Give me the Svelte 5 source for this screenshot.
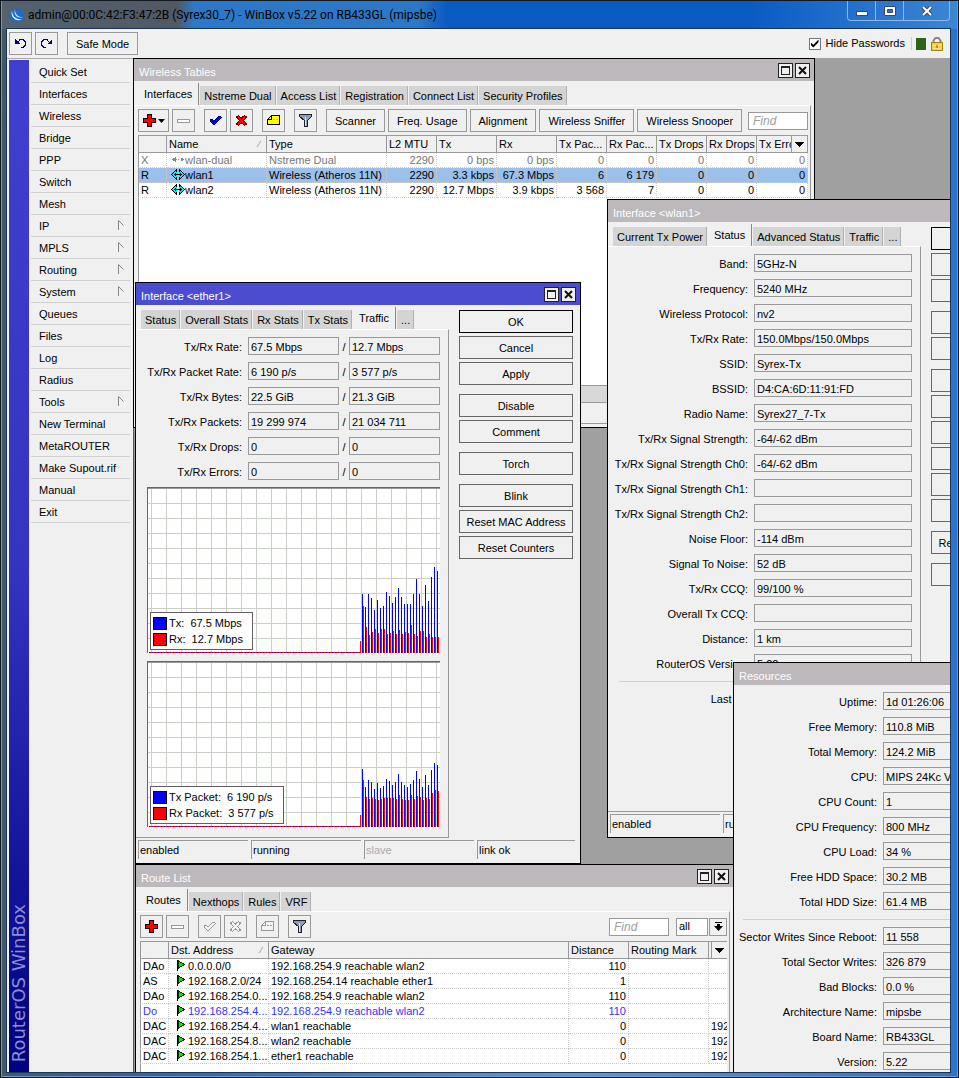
<script>
    let hidePasswords = true;
    let routeFilter = 'all';

    const menu = [
        { name: 'Quick Set' },
        { name: 'Interfaces' },
        { name: 'Wireless' },
        { name: 'Bridge' },
        { name: 'PPP' },
        { name: 'Switch' },
        { name: 'Mesh' },
        { name: 'IP', sub: true },
        { name: 'MPLS', sub: true },
        { name: 'Routing', sub: true },
        { name: 'System', sub: true },
        { name: 'Queues' },
        { name: 'Files' },
        { name: 'Log' },
        { name: 'Radius' },
        { name: 'Tools', sub: true },
        { name: 'New Terminal' },
        { name: 'MetaROUTER' },
        { name: 'Make Supout.rif' },
        { name: 'Manual' },
        { name: 'Exit' }
    ];

    // window places on the desktop
    const place = {
        wireless: { x: 0, y: 0, w: 682, h: 370 },
        routes: { x: 2, y: 806, w: 599, h: 300 },
        wlan1: { x: 474, y: 141, w: 446, h: 639 },
        ether1: { x: 2, y: 224, w: 446, h: 582 },
        resources: { x: 600, y: 604, w: 317, h: 460 }
    };

    const box = (p) => `left:${p.x}px;top:${p.y}px;width:${p.w}px;height:${p.h}px`;

    const wirelessCols = [
        { name: '', w: 29 },
        { name: 'Name', w: 100, sort: true },
        { name: 'Type', w: 120 },
        { name: 'L2 MTU', w: 50 },
        { name: 'Tx', w: 60 },
        { name: 'Rx', w: 60 },
        { name: 'Tx Pac...', w: 50 },
        { name: 'Rx Pac...', w: 50 },
        { name: 'Tx Drops', w: 50 },
        { name: 'Rx Drops', w: 50 },
        { name: 'Tx Erro', w: 35 }
    ];

    const wirelessRows = [
        { flag: 'X', name: 'wlan-dual', type: 'Nstreme Dual', state: 'off', nums: ['2290', '0 bps', '0 bps', '0', '0', '0', '0', '0'] },
        { flag: 'R', name: 'wlan1', type: 'Wireless (Atheros 11N)', state: 'selected', nums: ['2290', '3.3 kbps', '67.3 Mbps', '6', '6 179', '0', '0', '0'] },
        { flag: 'R', name: 'wlan2', type: 'Wireless (Atheros 11N)', state: '', nums: ['2290', '12.7 Mbps', '3.9 kbps', '3 568', '7', '0', '0', '0'] }
    ];

    const routeCols = [
        { name: '', w: 29 },
        { name: 'Dst. Address', w: 100, sort: true },
        { name: 'Gateway', w: 300 },
        { name: 'Distance', w: 60 },
        { name: 'Routing Mark', w: 80 },
        { name: '', w: 3 }
    ];

    const routeRows = [
        { flag: 'DAo', dst: '0.0.0.0/0', gw: '192.168.254.9 reachable wlan2', dist: 110, src: '' },
        { flag: 'AS', dst: '192.168.2.0/24', gw: '192.168.254.14 reachable ether1', dist: 1, src: '' },
        { flag: 'DAo', dst: '192.168.254.0...', gw: '192.168.254.9 reachable wlan2', dist: 110, src: '' },
        { flag: 'Do', dst: '192.168.254.4...', gw: '192.168.254.9 reachable wlan2', dist: 110, src: '', inactive: true },
        { flag: 'DAC', dst: '192.168.254.4...', gw: 'wlan1 reachable', dist: 0, src: '192' },
        { flag: 'DAC', dst: '192.168.254.8...', gw: 'wlan2 reachable', dist: 0, src: '192' },
        { flag: 'DAC', dst: '192.168.254.1...', gw: 'ether1 reachable', dist: 0, src: '192' }
    ];

    const etherFields = [
        ['Tx/Rx Rate', '67.5 Mbps', '12.7 Mbps'],
        ['Tx/Rx Packet Rate', '6 190 p/s', '3 577 p/s'],
        ['Tx/Rx Bytes', '22.5 GiB', '21.3 GiB'],
        ['Tx/Rx Packets', '19 299 974', '21 034 711'],
        ['Tx/Rx Drops', '0', '0'],
        ['Tx/Rx Errors', '0', '0']
    ];

    const wlanFields = [
        ['Band', '5GHz-N'],
        ['Frequency', '5240 MHz'],
        ['Wireless Protocol', 'nv2'],
        ['Tx/Rx Rate', '150.0Mbps/150.0Mbps'],
        ['SSID', 'Syrex-Tx'],
        ['BSSID', 'D4:CA:6D:11:91:FD'],
        ['Radio Name', 'Syrex27_7-Tx'],
        ['Tx/Rx Signal Strength', '-64/-62 dBm'],
        ['Tx/Rx Signal Strength Ch0', '-64/-62 dBm'],
        ['Tx/Rx Signal Strength Ch1', ''],
        ['Tx/Rx Signal Strength Ch2', ''],
        ['Noise Floor', '-114 dBm'],
        ['Signal To Noise', '52 dB'],
        ['Tx/Rx CCQ', '99/100 %'],
        ['Overall Tx CCQ', ''],
        ['Distance', '1 km'],
        ['RouterOS Version', '5.22'],
        null,
        ['Last IP', '']
    ];

    const resourceFields = [
        ['Uptime', '1d 01:26:06'],
        ['Free Memory', '110.8 MiB'],
        ['Total Memory', '124.2 MiB'],
        ['CPU', 'MIPS 24Kc V7.4'],
        ['CPU Count', '1'],
        ['CPU Frequency', '800 MHz'],
        ['CPU Load', '34 %'],
        ['Free HDD Space', '30.2 MB'],
        ['Total HDD Size', '61.4 MB'],
        null,
        ['Sector Writes Since Reboot', '11 558'],
        ['Total Sector Writes', '326 879'],
        ['Bad Blocks', '0.0 %'],
        ['Architecture Name', 'mipsbe'],
        ['Board Name', 'RB433GL'],
        ['Version', '5.22']
    ];

    const etherButtons = [
        ['OK', 'Cancel', 'Apply'],
        ['Disable', 'Comment'],
        ['Torch'],
        ['Blink', 'Reset MAC Address', 'Reset Counters']
    ];

    const wlanButtons = [
        ['OK', 'Cancel', 'Apply'],
        ['Disable', 'Comment'],
        ['Scan...', 'Freq. Usage...', 'Align...', 'Sniff...', 'Snooper...', 'Torch'],
        ['Reset MAC Address'],
        ['Blink']
    ];

    const bitCharts = {
        tx: [59, 46, 59, 55, 43, 53, 45, 47, 61, 57, 50, 56, 65, 56, 49, 49, 49, 59, 74, 59, 47, 68, 52, 76, 86, 82],
        rx: [47, 26, 18, 21, 24, 20, 24, 24, 19, 20, 22, 19, 23, 19, 21, 20, 28, 19, 17, 22, 22, 16, 19, 16, 16, 16],
        legend: ['Tx:  67.5 Mbps', 'Rx:  12.7 Mbps']
    };

    const packetCharts = {
        tx: [58, 40, 47, 45, 38, 44, 39, 41, 48, 46, 42, 45, 53, 45, 42, 40, 43, 47, 56, 48, 40, 52, 42, 57, 64, 62],
        rx: [47, 30, 28, 29, 28, 27, 28, 29, 29, 29, 29, 28, 32, 28, 27, 27, 32, 28, 31, 30, 27, 29, 28, 34, 37, 36],
        legend: ['Tx Packet:  6 190 p/s', 'Rx Packet:  3 577 p/s']
    };

    const vlines = Array.from({ length: 20 }, (_, i) => 4 + i * 15);
    const hlines = Array.from({ length: 10 }, (_, i) => 16 + i * 15);
</script>

{#snippet icon(name)}
    {#if name === 'undo' || name === 'redo'}
        <svg class="icon" class:flip={name === 'redo'} width="13" height="11" viewBox="0 0 13 11">
            <path d="M1 1V6H6Z" fill="#000080" />
            <path d="M3.500 4.500L6 1.500H9L11.500 4V7L9 9.500H7" fill="none" stroke="#000080" />
        </svg>
    {:else if name === 'add'}
        <svg class="icon" width="13" height="13" viewBox="0 0 13 13">
            <path d="M4.500 .500H8.500V4.500H12.500V8.500H8.500V12.500H4.500V8.500H.500V4.500H4.500Z" fill="#f00" stroke="#000" />
        </svg>
    {:else if name === 'remove'}
        <svg class="icon" width="13" height="13" viewBox="0 0 13 13">
            <rect x="0.5" y="5.5" width="12" height="3" fill="#fff" stroke="#999" />
        </svg>
    {:else if name === 'enable' || name === 'enable-off'}
        <svg class="icon" width="13" height="13" viewBox="0 0 13 13">
            <path
                d="M1 6L3 5L5 7L10 2L12 3V4L5 11L1 7Z"
                fill={name === 'enable' ? '#00f' : '#f4f4f4'}
                stroke={name === 'enable' ? '#000080' : '#999'}
            />
        </svg>
    {:else if name === 'disable' || name === 'disable-off'}
        <svg class="icon" width="13" height="13" viewBox="0 0 13 13">
            <path
                d="M1.500 3L3.500 1.500L6.500 4L9.500 1.500L11.500 3L8.500 6.500L11.500 10L9.500 11.500L6.500 9L3.500 11.500L1.500 10L4.500 6.500Z"
                fill={name === 'disable' ? '#f00' : '#f4f4f4'}
                stroke={name === 'disable' ? '#500' : '#999'}
            />
        </svg>
    {:else if name === 'comment' || name === 'comment-off'}
        <svg class="icon" width="13" height="13" viewBox="0 0 13 13">
            <path
                d="M4.500 1.500H12.500V10.500H.500V5.500Z"
                fill={name === 'comment' ? '#ff0' : '#f4f4f4'}
                stroke={name === 'comment' ? '#000' : '#999'}
            />
            <path d="M.500 5.500H4.500V1.500" fill="none" stroke={name === 'comment' ? '#000' : '#999'} />
            <path d="M6 5.500H11" stroke={name === 'comment' ? '#bb8' : '#999'} stroke-dasharray="2 1" />
        </svg>
    {:else if name === 'filter'}
        <svg class="icon" width="13" height="13" viewBox="0 0 13 13">
            <path d="M.500 .500H12.500V2.500L8.500 6.500V12.500H5.500V6.500L.500 2.500Z" fill="#8c9cbc" stroke="#222" />
            <path d="M6.500 3V12" stroke="#dde4f0" />
        </svg>
    {:else if name === 'wlan' || name === 'wlan-off'}
        <svg class="icon" width="14" height="11" viewBox="0 0 14 11">
            {#if name === 'wlan'}
                <path d="M5.500 .500V10.500L.500 5.500ZM8.500 .500V10.500L13.500 5.500Z" fill="#0ee" stroke="#000" />
                <path d="M5 3H6V8H5ZM8 3H9V8H8Z" fill="#0ee" />
                <path d="M3 5.500H11M4.500 4V7M9.500 4V7" stroke="#000" />
            {:else}
                <path d="M4.500 3V8L1 5.500ZM9.500 3V8L13 5.500Z" fill="#888" />
                <path d="M5 5.500H9" stroke="#888" stroke-dasharray="1 1" />
            {/if}
        </svg>
    {:else if name === 'route'}
        <svg class="icon" width="9" height="11" viewBox="0 0 9 11">
            <path d="M1.500 1L7.500 4.500L1.500 8Z" fill="#0e0" stroke="#030" />
            <path d="M.500 0V11" stroke="#000" />
        </svg>
    {:else if name === 'down'}
        <svg class="icon" width="9" height="5" viewBox="0 0 9 5"><path d="M0 0H9L4.500 5Z" /></svg>
    {/if}
{/snippet}

{#snippet titleBar(title, buttons)}
    <header class="win-title">
        <span>{title}</span>
        {#if buttons}
            <button class="win-btn" aria-label="Maximize">
                <svg class="icon" width="9" height="9" viewBox="0 0 9 9">
                    <path d="M.500 1H8.500V8.500H.500Z" fill="none" stroke="#222" />
                    <path d="M0 1H9" stroke="#222" stroke-width="2" />
                </svg>
            </button>
            <button class="win-btn" aria-label="Close">
                <svg width="9" height="9" viewBox="0 0 9 9"><path d="M1 1L8 8M8 1L1 8" stroke="#111" stroke-width="2" /></svg>
            </button>
        {/if}
    </header>
{/snippet}

{#snippet tabs(names, active)}
    <nav class="tabs">
        {#each names as name}
            <button class="tab" class:active={name === active}>{name}</button>
        {/each}
    </nav>
{/snippet}

{#snippet field(prefix, row)}
    {#if row}
        <div class="field">
            <label for="{prefix}-{row[0]}">{row[0]}:</label>
            <input id="{prefix}-{row[0]}" value={row[1]} readonly />
        </div>
    {:else}
        <hr />
    {/if}
{/snippet}

{#snippet sideButtons(groups)}
    <div class="side-buttons">
        {#each groups as group}
            <div class="btn-group">
                {#each group as name}
                    <button class="btn" class:default={name === 'OK'}>{name}</button>
                {/each}
            </div>
        {/each}
    </div>
{/snippet}

{#snippet chart(data)}
    <div class="chart">
        <svg width="293" height="167" viewBox="0 0 293 167" shape-rendering="crispEdges">
            <rect width="293" height="167" fill="#fff" />
            {#each vlines as x}
                <rect {x} y="0" width="1" height="166" fill="#c8d0c8" />
            {/each}
            {#each hlines as y}
                <rect x="0" {y} width="293" height="1" fill="#c8d0c8" />
            {/each}
            <path d="M2 165.500H213" stroke="#00f" />
            <path d="M3 165.500H213" stroke="#f00" stroke-dasharray="2 1" />
            <rect x="213" y="154" width="1" height="12" fill="#f00" />
            {#each data.tx as h, i}
                <rect x={215 + i * 3} y={166 - h} width="1" height={h} fill="#00f" />
            {/each}
            {#each data.rx as h, i}
                <rect x={216 + i * 3} y={166 - h} width="1" height={h} fill="#f00" />
            {/each}
            <path d="M0 .500H293M.500 0V166" stroke="#666" />
            <path d="M1 1.500H293" stroke="#999" />
        </svg>
        <div class="legend">
            <div><i class="tx"></i>{data.legend[0]}</div>
            <div><i class="rx"></i>{data.legend[1]}</div>
        </div>
    </div>
{/snippet}

{#snippet tableHead(cols)}
    <colgroup>
        {#each cols as col}
            <col style="width:{col.w}px" />
        {/each}
        <col style="width:16px" />
    </colgroup>
    <thead>
        <tr>
            {#each cols as col}
                <th>
                    <span>{col.name}</span>
                    {#if col.sort}<span class="sort">∕</span>{/if}
                </th>
            {/each}
            <th class="pick">{@render icon('down')}</th>
        </tr>
    </thead>
{/snippet}

<div class="frame">
    <header class="app-title">
        <svg width="15" height="15" viewBox="0 0 15 15">
            <circle cx="7.5" cy="7.5" r="7" fill="#1c6cc8" />
            <path d="M3 2.500C3 8 7 12 13 11.500C7 14 1 9 3 2.500Z" fill="#fff" />
            <path d="M6 1.500C6 6 9 9.500 14 9C9 11 4 7 6 1.500Z" fill="#cfe4fa" />
        </svg>
        <h1>admin@00:0C:42:F3:47:2B (Syrex30_7) - WinBox v5.22 on RB433GL (mipsbe)</h1>
        <div class="sys-buttons">
            <button aria-label="Minimize">
                <svg width="12" height="10" viewBox="0 0 12 10"><rect x="0.5" y="5.5" width="11" height="4" fill="#fff" stroke="#446" /></svg>
            </button>
            <button aria-label="Maximize">
                <svg width="12" height="10" viewBox="0 0 12 10">
                    <path d="M.500 .500H11.500V9.500H.500ZM3.500 3.500V6.500H8.500V3.500Z" fill="#fff" stroke="#446" fill-rule="evenodd" />
                </svg>
            </button>
            <button class="close" aria-label="Close">
                <svg width="12" height="10" viewBox="0 0 12 10">
                    <path d="M2 1L10 9M10 1L2 9" stroke="#446" stroke-width="4" />
                    <path d="M2 1L10 9M10 1L2 9" stroke="#fff" stroke-width="2" />
                </svg>
            </button>
        </div>
    </header>

    <div class="client">
        <div class="top-bar">
            <button class="tool" aria-label="Undo">{@render icon('undo')}</button>
            <button class="tool" aria-label="Redo">{@render icon('redo')}</button>
            <button class="tool group">Safe Mode</button>
            <label class="hide"><input type="checkbox" bind:checked={hidePasswords} />Hide Passwords</label>
            <span class="led"></span>
            <svg width="12" height="14" viewBox="0 0 12 14">
                <path d="M2.500 7V3.500L4.500 1H7.500L9.500 3.500V7" fill="none" stroke="#888" stroke-width="2" />
                <rect x="0.5" y="5.5" width="11" height="8" fill="#f4d048" stroke="#a88018" />
                <path d="M2 8.500H10M2 11.500H10" stroke="#fbe690" />
                <path d="M6 8V11" stroke="#805c10" />
            </svg>
        </div>

        <div class="main">
            <aside>
                <div class="brand"><span>RouterOS WinBox</span></div>
                <nav class="menu">
                    {#each menu as item}
                        <button>
                            {item.name}
                            {#if item.sub}
                                <svg width="6" height="10" viewBox="0 0 6 10"><path d="M.500 10V.500L5.500 5.500" fill="none" stroke="#888" /></svg>
                            {/if}
                        </button>
                    {/each}
                </nav>
            </aside>

            <div class="desktop">
                <section class="win" style={box(place.wireless)}>
                    {@render titleBar('Wireless Tables', true)}
                    {@render tabs(['Interfaces', 'Nstreme Dual', 'Access List', 'Registration', 'Connect List', 'Security Profiles'], 'Interfaces')}
                    <div class="list-panel">
                        <div class="tools">
                            <button class="tool wide" aria-label="Add">{@render icon('add')}<svg width="7" height="4" viewBox="0 0 7 4"><path d="M0 0H7L3.500 4Z" /></svg></button>
                            <button class="tool" aria-label="Remove">{@render icon('remove')}</button>
                            <button class="tool group" aria-label="Enable">{@render icon('enable')}</button>
                            <button class="tool" aria-label="Disable">{@render icon('disable')}</button>
                            <button class="tool group" aria-label="Comment">{@render icon('comment')}</button>
                            <button class="tool group" aria-label="Filter">{@render icon('filter')}</button>
                            <button class="tool group">Scanner</button>
                            <button class="tool">Freq. Usage</button>
                            <button class="tool">Alignment</button>
                            <button class="tool">Wireless Sniffer</button>
                            <button class="tool">Wireless Snooper</button>
                            <input class="find" placeholder="Find" aria-label="Find" />
                        </div>
                        <div class="grid">
                            <table>
                                {@render tableHead(wirelessCols)}
                                <tbody>
                                    {#each wirelessRows as row}
                                        <tr class={row.state}>
                                            <td>{row.flag}</td>
                                            <td class="named">{@render icon(row.state === 'off' ? 'wlan-off' : 'wlan')}{row.name}</td>
                                            <td>{row.type}</td>
                                            {#each row.nums as num, i}
                                                <td class="num" colspan={i === 7 ? 2 : 1}>{num}</td>
                                            {/each}
                                        </tr>
                                    {/each}
                                </tbody>
                            </table>
                        </div>
                        <div class="scroll"></div>
                        <div class="count"></div>
                    </div>
                </section>

                <section class="win" style={box(place.routes)}>
                    {@render titleBar('Route List', true)}
                    {@render tabs(['Routes', 'Nexthops', 'Rules', 'VRF'], 'Routes')}
                    <div class="list-panel">
                        <div class="tools">
                            <button class="tool" aria-label="Add">{@render icon('add')}</button>
                            <button class="tool" aria-label="Remove">{@render icon('remove')}</button>
                            <button class="tool group" aria-label="Enable">{@render icon('enable-off')}</button>
                            <button class="tool" aria-label="Disable">{@render icon('disable-off')}</button>
                            <button class="tool group" aria-label="Comment">{@render icon('comment-off')}</button>
                            <button class="tool group" aria-label="Filter">{@render icon('filter')}</button>
                            <input class="find" placeholder="Find" aria-label="Find" />
                            <div class="pick-box">
                                <select bind:value={routeFilter} aria-label="Table">
                                    <option>all</option>
                                    <option>main</option>
                                </select>
                                <span><svg width="9" height="9" viewBox="0 0 9 9"><path d="M1 0H8V1H1ZM3 2H6V4H9L4.500 9L0 4H3Z" /></svg></span>
                            </div>
                        </div>
                        <div class="grid">
                            <table>
                                {@render tableHead(routeCols)}
                                <tbody>
                                    {#each routeRows as row}
                                        <tr class:inactive={row.inactive}>
                                            <td>{row.flag}</td>
                                            <td class="named route">{@render icon('route')}{row.dst}</td>
                                            <td>{row.gw}</td>
                                            <td class="num">{row.dist}</td>
                                            <td></td>
                                            <td colspan="2">{row.src}</td>
                                        </tr>
                                    {/each}
                                </tbody>
                            </table>
                        </div>
                    </div>
                </section>

                <section class="win form" style={box(place.wlan1)}>
                    {@render titleBar('Interface <wlan1>', false)}
                    {@render tabs(['Current Tx Power', 'Status', 'Advanced Status', 'Traffic', '...'], 'Status')}
                    <div class="form-body">
                        <div class="panel">
                            {#each wlanFields as row}
                                {@render field('wlan', row)}
                            {/each}
                        </div>
                        {@render sideButtons(wlanButtons)}
                    </div>
                    <footer class="status">
                        <span>enabled</span><span>running</span><span></span><span></span>
                    </footer>
                </section>

                <section class="win form focused" style={box(place.ether1)}>
                    {@render titleBar('Interface <ether1>', true)}
                    {@render tabs(['Status', 'Overall Stats', 'Rx Stats', 'Tx Stats', 'Traffic', '...'], 'Traffic')}
                    <div class="form-body">
                        <div class="panel">
                            {#each etherFields as row}
                                <div class="field pair">
                                    <label for="ether-{row[0]}">{row[0]}:</label>
                                    <input id="ether-{row[0]}" value={row[1]} readonly />
                                    <span>/</span>
                                    <input value={row[2]} aria-label="{row[0]} received" readonly />
                                </div>
                            {/each}
                            {@render chart(bitCharts)}
                            {@render chart(packetCharts)}
                        </div>
                        {@render sideButtons(etherButtons)}
                    </div>
                    <footer class="status">
                        <span>enabled</span><span>running</span><span class="dim">slave</span><span>link ok</span>
                    </footer>
                </section>

                <section class="win" style={box(place.resources)}>
                    {@render titleBar('Resources', false)}
                    <div class="resources">
                        {#each resourceFields as row}
                            {@render field('res', row)}
                        {/each}
                    </div>
                </section>
            </div>
        </div>
    </div>
</div>

<style>
    :global(body) {
        margin: 0;
    }

    .frame {
        box-sizing: border-box;
        height: 100vh;
        display: flex;
        flex-direction: column;
        padding: 0 9px 6px 7px;
        overflow: hidden;
        background: linear-gradient(90deg, #42586a, #2c6cb8 20%, #5c98dc 60%, #2a74d0);
        box-shadow: inset 0 0 0 1px #101820, inset 0 0 0 2px #7098c0;
        font: 11px/13px "Liberation Sans", Arial, sans-serif;
        color: #000;
    }

    button,
    input,
    select {
        box-sizing: border-box;
        margin: 0;
        padding: 0;
        border-radius: 0;
        font: inherit;
        color: inherit;
        white-space: nowrap;
    }

    svg {
        display: block;
        flex: none;
    }

    .icon {
        shape-rendering: crispEdges;
    }

    .flip {
        transform: scaleX(-1);
    }

    .app-title {
        flex: none;
        display: flex;
        align-items: center;
        height: 28px;
        margin: 1px -7px 0 -5px;
        padding: 0 7px;
        background: linear-gradient(90deg, #566270, #505864 175px, #2c78c8 192px, #2c78c8 415px, #0a5ac4 445px, #0a5ac4 78%, #3c86d4);
    }

    h1 {
        flex: 1;
        margin: 0 0 0 4px;
        font: 12px/20px Roboto, sans-serif;
        white-space: nowrap;
    }

    .sys-buttons {
        align-self: flex-start;
        display: flex;
        height: 19px;
        border: 1px solid #8cb8e8;
        border-top: 0;
        border-radius: 0 0 4px 4px;
    }

    .sys-buttons button {
        display: grid;
        place-items: center;
        width: 28px;
        border: 0;
        border-right: 1px solid #8cb8e8;
        background: none;
    }

    .sys-buttons .close {
        width: 45px;
        border-right: 0;
    }

    .client {
        flex: 1;
        min-height: 0;
        display: flex;
        flex-direction: column;
        background: #f0f0f0;
        box-shadow: 0 0 0 1px #1c3450;
    }

    .top-bar {
        flex: none;
        display: flex;
        align-items: center;
        gap: 3px;
        height: 29px;
        padding: 0 7px 0 2px;
    }

    .tool {
        flex: none;
        display: flex;
        align-items: center;
        justify-content: center;
        gap: 2px;
        height: 23px;
        min-width: 23px;
        padding: 1px 8px 0;
        border: 1px solid #999;
        background: #f0f0f0;
    }

    .tool[aria-label] {
        padding: 0;
    }

    .wide {
        width: 31px;
    }

    .group {
        margin-left: 6px;
    }

    .hide {
        display: flex;
        align-items: center;
        gap: 5px;
        margin-left: auto;
        padding-right: 6px;
        border-right: 1px solid #ccc;
    }

    .hide input {
        appearance: none;
        display: grid;
        place-items: center;
        width: 12px;
        height: 12px;
        border: 1px solid #777;
        background: #fff;
    }

    .hide input:checked::before {
        content: "";
        width: 8px;
        height: 8px;
        background: #000;
        clip-path: polygon(0 35%, 35% 65%, 100% 0, 100% 35%, 35% 100%, 0 65%);
    }

    .led {
        width: 10px;
        height: 12px;
        margin: 0 2px 0 1px;
        background: #2c6418;
    }

    .main {
        flex: 1;
        min-height: 0;
        display: flex;
    }

    aside {
        box-sizing: border-box;
        flex: none;
        width: 126px;
        display: flex;
        gap: 2px;
        padding: 1px 3px 0 2px;
        border-top: 1px solid #aaa;
    }

    .brand {
        flex: none;
        display: flex;
        align-items: flex-end;
        justify-content: center;
        width: 20px;
        padding-bottom: 10px;
        background: linear-gradient(#4040d0, #3434c0 50%, #000080);
    }

    .brand span {
        writing-mode: vertical-rl;
        transform: rotate(180deg);
        font: 18px/20px "DejaVu Sans", sans-serif;
        color: #8c8cd0;
        white-space: nowrap;
    }

    .menu {
        flex: 1;
        padding-top: 1px;
    }

    .menu button {
        display: flex;
        align-items: center;
        justify-content: space-between;
        width: 100%;
        height: 22px;
        padding: 2px 6px 0 8px;
        border: 0;
        border-bottom: 1px solid #d0d0d0;
        background: none;
    }

    .menu svg {
        margin-bottom: 4px;
    }

    .desktop {
        flex: 1;
        position: relative;
        overflow: hidden;
        background: #a0a0a0;
        box-shadow: inset 1px 0 #555;
    }

    .win {
        box-sizing: border-box;
        position: absolute;
        display: flex;
        flex-direction: column;
        border: 1px solid #000;
        background: #f0f0f0;
    }

    .win-title {
        flex: none;
        display: flex;
        align-items: center;
        gap: 2px;
        height: 22px;
        padding: 0 4px 0 5px;
        margin-bottom: 2px;
        background: #bcb8bc;
        color: #fff;
    }

    .focused .win-title {
        background: #4c4cd0;
    }

    .win-title span {
        flex: 1;
        padding-top: 5px;
    }

    .win-btn {
        display: grid;
        place-items: center;
        width: 15px;
        height: 15px;
        border: 1px solid #222;
        background: #f0f0f0;
    }

    .tabs {
        flex: none;
        display: flex;
        align-items: flex-end;
        gap: 1px;
        height: 22px;
        padding-left: 4px;
    }

    .form .tabs {
        padding-left: 5px;
    }

    .tab {
        height: 19px;
        padding: 2px 3px 0 4px;
        border: 0;
        border-right: 1px solid #b0b0b0;
        background: #d4d4d4;
    }

    .tab.active {
        height: 22px;
        padding: 0 6px;
        border-right: 1px solid #888;
        background: #f0f0f0;
    }

    .list-panel {
        flex: 1;
        min-height: 0;
        display: flex;
        flex-direction: column;
        margin-right: 3px;
        padding: 3px 2px 0 4px;
        border-top: 1px solid #fff;
        border-right: 1px solid #999;
    }

    .tools {
        flex: none;
        display: flex;
        align-items: center;
        gap: 3px;
        margin-bottom: 3px;
    }

    .find {
        width: 60px;
        height: 18px;
        margin-left: auto;
        padding: 0 4px;
        border: 1px solid #999;
        background: #fff;
        font-size: 12px;
    }

    .find::placeholder {
        color: #a0a0a0;
        font-style: italic;
        opacity: 1;
    }

    .pick-box {
        display: flex;
        gap: 1px;
        margin-left: 4px;
    }

    .pick-box select {
        appearance: none;
        width: 32px;
        height: 18px;
        padding: 0 2px;
        border: 1px solid #999;
        background: #fff;
    }

    .pick-box span {
        display: grid;
        place-items: center;
        width: 18px;
        border: 1px solid #999;
        box-sizing: border-box;
    }

    .grid {
        flex: 1;
        min-height: 0;
        overflow: hidden;
        background: #fff;
        box-shadow: inset 1px 0 #999;
    }

    table {
        width: 100%;
        table-layout: fixed;
        border-collapse: separate;
        border-spacing: 0;
    }

    th,
    td {
        box-sizing: border-box;
        padding: 0 2px;
        overflow: hidden;
        white-space: nowrap;
        text-align: left;
        font-weight: normal;
    }

    th {
        height: 18px;
        padding-top: 1px;
        border: 1px solid #999;
        border-left: 0;
        background: #f0f0f0;
        line-height: 15px;
    }

    th:first-child {
        border-left: 1px solid #999;
    }

    th .sort {
        float: right;
        padding-right: 4px;
        color: #888;
        font-size: 9px;
    }

    th.pick .icon {
        margin: 0 auto;
    }

    td {
        height: 15px;
        border-right: 1px dotted #ccc;
        border-bottom: 1px dotted #ccc;
        line-height: 14px;
    }

    td:first-child {
        border-left: 1px solid #999;
    }

    .num {
        text-align: right;
    }

    .named .icon {
        float: left;
        margin: 1px 0 0 2px;
    }

    .route .icon {
        margin: 1px 2px 0 6px;
    }

    .off td {
        color: #777;
    }

    .selected td {
        background: #9cc0ec;
    }

    .inactive td {
        color: #33f;
    }

    .scroll {
        flex: none;
        height: 16px;
        border-top: 1px solid #999;
        background: #d8d8d8;
    }

    .count {
        flex: none;
        height: 20px;
        margin-bottom: 3px;
        border-top: 1px solid #999;
        border-bottom: 1px solid #999;
    }

    .form-body {
        flex: 1;
        min-height: 0;
        display: flex;
        gap: 10px;
        padding-right: 7px;
    }

    .panel {
        flex: 1;
        min-width: 0;
        display: flex;
        flex-direction: column;
        gap: 7px;
        padding: 7px 8px 0 11px;
        border-top: 1px solid #fff;
        border-right: 1px solid #999;
        border-bottom: 1px solid #999;
    }

    .field {
        flex: none;
        display: flex;
        align-items: center;
        justify-content: flex-end;
        gap: 6px;
        height: 18px;
        white-space: nowrap;
    }

    .field label {
        flex: none;
        padding-top: 2px;
    }

    .field input {
        flex: none;
        width: 158px;
        height: 18px;
        padding: 2px 2px 0;
        border: 1px solid #999;
        background: #f0f0f0;
        outline: none;
    }

    .pair input {
        width: 91px;
    }

    .pair span {
        width: 10px;
        margin: 0 -6px;
        padding-top: 2px;
        text-align: center;
    }

    hr {
        width: 100%;
        height: 0;
        margin: 2px 0 0;
        border: 0;
        border-top: 1px solid #d0d0d0;
    }

    .side-buttons {
        flex: none;
        display: flex;
        flex-direction: column;
        gap: 9px;
        width: 114px;
        margin-top: -19px;
    }

    .btn-group {
        display: flex;
        flex-direction: column;
        gap: 3px;
    }

    .btn {
        height: 23px;
        padding-top: 2px;
        border: 1px solid #666;
        background: #f0f0f0;
    }

    .btn.default {
        border-color: #000;
    }

    .chart {
        position: relative;
        height: 167px;
    }

    .legend {
        position: absolute;
        left: 3px;
        bottom: 4px;
        padding: 2px 9px 2px 2px;
        border: 1px solid #665c66;
        background: #fff;
        line-height: 16px;
    }

    .legend div {
        display: flex;
        align-items: center;
        gap: 2px;
        white-space: pre;
    }

    .legend i {
        width: 12px;
        height: 11px;
        border: 1px solid #000;
    }

    .tx {
        background: #00f;
    }

    .rx {
        background: #f00;
    }

    .status {
        flex: none;
        display: grid;
        grid-template-columns: repeat(3, 110px) 1fr;
        gap: 3px;
        margin: 2px 5px 4px 2px;
    }

    .status span {
        height: 18px;
        padding-left: 1px;
        border-top: 1px solid #999;
        border-left: 1px solid #999;
        line-height: 18px;
    }

    .status .dim {
        color: #aaa;
    }

    .resources {
        display: flex;
        flex-direction: column;
        gap: 7px;
        padding: 5px 8px 0 9px;
    }
</style>
